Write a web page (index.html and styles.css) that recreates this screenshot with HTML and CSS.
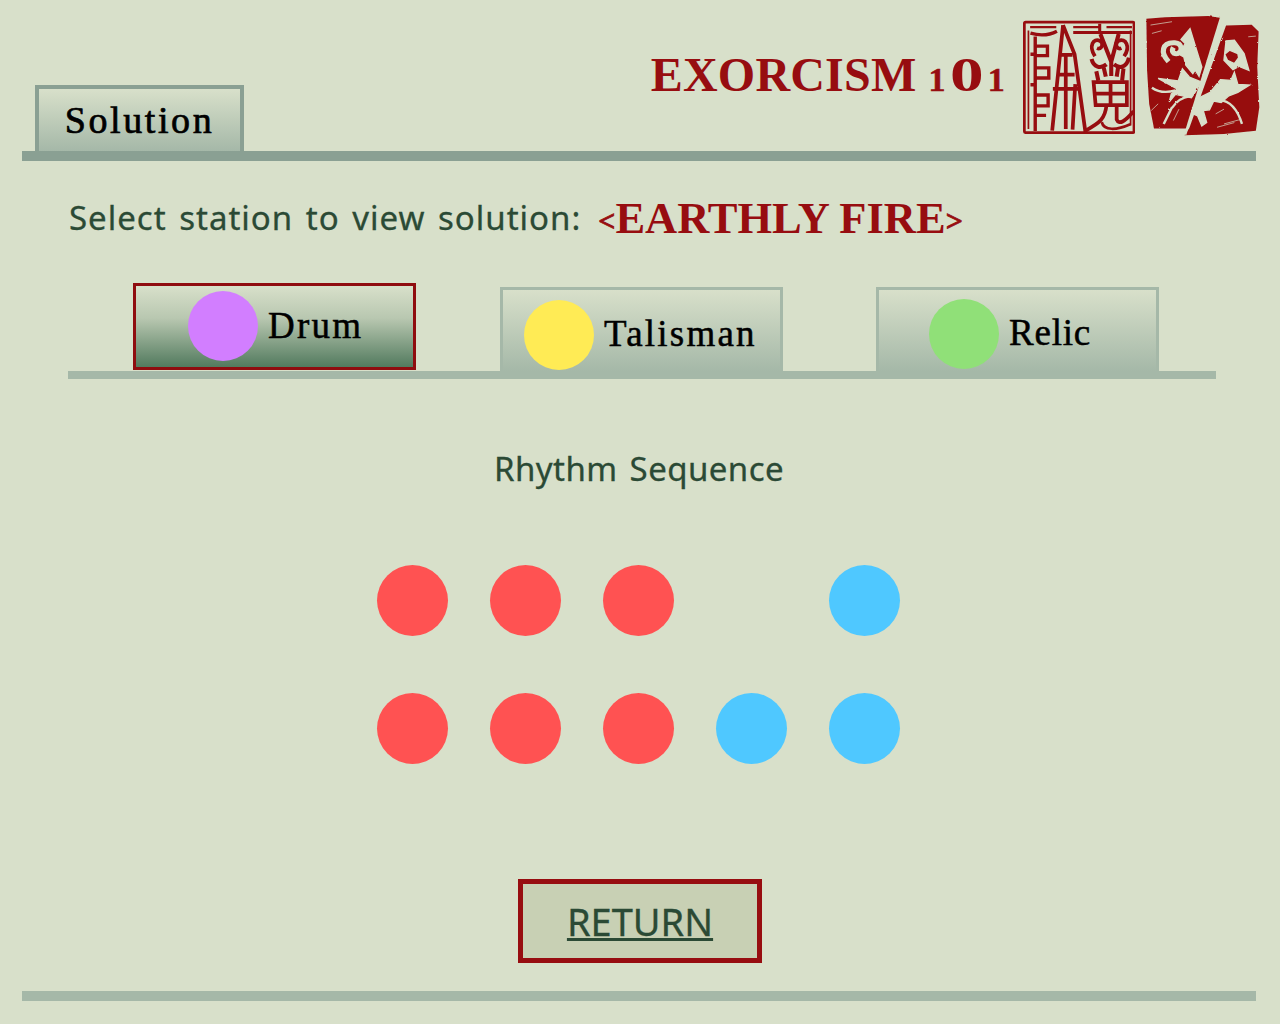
FILE: index.html
```html
<!DOCTYPE html>
<html lang="en">
<head>
<meta charset="utf-8">
<title>Exorcism 101 - Solution</title>
<link rel="stylesheet" href="styles.css">
</head>
<body>
<div class="page">
  <header class="header">
    <div class="main-tab">Solution</div>
    <div class="brand">
      <h1 class="title">EXORCISM <span class="num-one">1</span><span class="num-zero">0</span><span class="num-one">1</span></h1>
      <svg class="seal-a" viewBox="24 30 330 334" aria-hidden="true">
        <g fill="none" stroke="#970d10" stroke-width="8">
          <rect x="28" y="35" width="323" height="326" rx="4"/>
          <path stroke-width="5" d="M40 60V350M341 60V340"/>
          <path stroke-width="7" d="M45 50H122M172 50H250M270 50H345"/>
          <path stroke-width="10" d="M46 68Q90 80 124 62M60 78V356M60 106H96V134H60M60 170H100V200H60M60 250H98V282H60M60 310H92M46 130H60M46 220H60"/>
          <path stroke-width="11" d="M142 44 110 355M142 44 176 130 208 360M124 190H176M112 232H190M150 132V350M178 218 170 352M134 132H170"/>
          <path stroke-width="9" d="M250 40V62M172 66H345"/>
          <path stroke-width="11" d="M236 136C216 104 232 82 250 90 264 98 256 118 242 112M322 136C342 106 326 82 306 90 292 98 300 118 314 112"/>
          <path stroke-width="12" d="M252 70 284 152 306 70M226 144C232 168 252 174 270 160M336 140C330 168 310 174 292 160M240 180 246 208M320 172 316 208M284 150V194M262 170 268 196M304 170 300 196"/>
          <path stroke-width="11" d="M232 212H330V280H238ZM236 246H328M282 212V280M270 280C266 320 250 332 210 354M300 280V322Q310 346 350 298"/>
          <path stroke-width="8" d="M256 330C262 356 300 354 340 336"/>
        </g>
      </svg>
      <svg class="seal-b" viewBox="392 15 332 364" preserveAspectRatio="none" aria-hidden="true">
        <defs>
          <filter id="rough" x="-5%" y="-5%" width="110%" height="110%">
            <feTurbulence type="fractalNoise" baseFrequency="0.09" numOctaves="2" seed="4"/>
            <feDisplacementMap in="SourceGraphic" scale="6"/>
          </filter>
        </defs>
        <g class="rough">
          <path class="ink" d="M396 26 450 22 575 18 612 24 514 354 418 354 404 280 398 180Z"/>
          <path class="ink" d="M626 46 700 44 720 64 716 170 722 290 712 360 620 370 506 374 520 352Z"/>
          <path class="paper" d="M522 56 556 170 548 198 536 178 544 168 530 190 510 165 504 140 490 132 508 100 496 88Z"/>
          <path class="curl" d="M460 154C436 128 440 96 478 98 500 100 502 124 486 130 472 132 468 122 474 112"/>
          <path class="paper" d="M430 204 488 212 500 176 520 200 552 214 540 240 526 262 480 252 462 274 468 250 486 236Z"/>
          <path class="paper" d="M610 208 640 210 650 186 660 222 694 224 660 246 634 256 612 276 590 272 578 298 560 300 570 336 556 346 544 316 526 308 548 262 580 246Z"/>
          <path class="paper" d="M626 92 650 90 678 130 692 180 668 170 660 130 636 120 622 132 630 150 650 160 664 140 670 165 646 178 620 150Z"/>
          <path class="thin" d="M412 232Q440 252 480 240M470 292Q490 262 520 258M606 268Q652 272 672 340M446 340 470 290"/>
        </g>
        <path class="slit" d="M612 22 508 372"/>
        <path class="hair" d="M408 45 470 35M412 70 440 62M410 300 430 280M620 340 670 326M474 330 490 296M600 350 650 336M690 80 712 78M596 310 620 296"/>
      </svg>
    </div>
  </header>
  <div class="rule rule-dark"></div>

  <section class="prompt">
    <span class="prompt-text">Select station to view solution:</span>
    <span class="station"><span class="bracket">&lt;</span>EARTHLY FIRE<span class="bracket">&gt;</span></span>
  </section>

  <nav class="stations">
    <div class="tab tab-active tab-drum"><span class="swatch swatch-drum"></span><span class="tab-label">Drum</span></div>
    <div class="tab tab-talisman"><span class="swatch swatch-talisman"></span><span class="tab-label">Talisman</span></div>
    <div class="tab tab-relic"><span class="swatch swatch-relic"></span><span class="tab-label">Relic</span></div>
  </nav>
  <div class="rule-thin"></div>

  <h2 class="sequence-title">Rhythm Sequence</h2>

  <div class="dots">
    <span class="dot red"></span><span class="dot red"></span><span class="dot red"></span><span class="dot"></span><span class="dot blue"></span>
    <span class="dot red"></span><span class="dot red"></span><span class="dot red"></span><span class="dot blue"></span><span class="dot blue"></span>
  </div>

  <div class="actions"><a class="return" href="#">RETURN</a></div>
  <div class="rule rule-light"></div>
</div>
</body>
</html>
```

FILE: styles.css
```css
* { box-sizing: border-box; }
html, body { margin: 0; padding: 0; }
body { background: #d8e0ca; font-family: "Noto Sans", sans-serif; color: #2b4a35; overflow: hidden; }
.page { width: 1280px; height: 1024px; padding: 0 24px 0 22px; display: flex; flex-direction: column; }

.header { height: 151px; display: flex; justify-content: space-between; align-items: flex-end; }
.main-tab { margin-left: 13px; width: 209px; height: 66px; border: 4px solid #8aa093; border-bottom: 0; background: linear-gradient(#d8e0ca, #a5b8a8); color: #000; font-family: "Liberation Serif", serif; font-size: 38px; letter-spacing: 2.6px; -webkit-text-stroke: 0.7px #000; text-align: center; line-height: 62px; }
.brand { align-self: stretch; display: flex; align-items: flex-start; margin-right: -4px; }
.title { margin: 47px 18px 0 0; color: #970d10; font-family: "Liberation Serif", serif; font-weight: 700; font-size: 48px; line-height: 56px; letter-spacing: 0.2px; white-space: nowrap; }
.num-one { font-size: 34px; -webkit-text-stroke: 0.5px #970d10; }
.num-zero { display: inline-block; width: 42px; text-align: center; transform: scaleX(1.4); }
.seal-a { width: 112px; height: 114px; margin: 20px 10px 0 0; }
.seal-b { width: 115px; height: 122px; margin-top: 15px; }
.rough { filter: url(#rough); }
.ink { fill: #970d10; }
.paper { fill: #d8e0ca; stroke: #d8e0ca; stroke-width: 4; }
.curl { fill: none; stroke: #d8e0ca; stroke-width: 15; }
.thin { fill: none; stroke: #d8e0ca; stroke-width: 7; }
.slit { fill: none; stroke: #d8e0ca; stroke-width: 7; }
.hair { fill: none; stroke: #d8e0ca; stroke-width: 2; }

.rule { height: 10px; flex: none; }
.rule-dark { background: #8aa093; }
.rule-light { background: #a5b8a8; margin-top: 28px; }

.prompt { margin: 32px 0 0 47px; height: 48px; display: flex; align-items: center; gap: 17px; }
.prompt-text { font-size: 33px; letter-spacing: 1px; word-spacing: 3px; -webkit-text-stroke: 0.3px #2b4a35; }
.station { margin-top: 2px; color: #970d10; font-family: "Liberation Serif", serif; font-weight: 700; font-size: 44.5px; white-space: nowrap; }
.bracket { font-size: 30px; vertical-align: 2px; -webkit-text-stroke: 0.8px #970d10; }

.stations { margin: 42px 0 0 46px; width: 1148px; height: 88px; display: flex; align-items: flex-end; }
.tab { width: 283px; display: flex; align-items: center; color: #000; font-family: "Liberation Serif", serif; font-size: 37px; letter-spacing: 2.2px; gap: 10px; }
.tab-label { -webkit-text-stroke: 0.5px #000; position: relative; bottom: 2px; }
.swatch { width: 70px; height: 70px; border-radius: 50%; flex: none; }
.swatch-drum { background: #d27eff; }
.swatch-talisman { background: #ffeb55; }
.swatch-relic { background: #90e078; }
.tab-drum { margin-left: 65px; height: 87px; margin-bottom: 1px; border: 3px solid #8f0c0f; background: linear-gradient(#d8e0ca, #b8c7b0 40%, #527a5e); padding: 0 0 2px 52px; }
.tab-drum .tab-label { bottom: 0; }
.tab-talisman { margin-left: 84px; height: 84px; border: 3px solid #a5b8a8; border-bottom: 0; background: linear-gradient(#d8e0ca, #a5b8a8); padding-left: 21px; padding-top: 9px; }
.tab-relic { margin-left: 93px; height: 84px; border: 3px solid #a5b8a8; border-bottom: 0; background: linear-gradient(#d8e0ca, #a5b8a8); padding-left: 50px; padding-top: 7px; letter-spacing: 0.8px; }
.rule-thin { margin-left: 46px; width: 1148px; height: 8px; background: #a5b8a8; flex: none; }

.sequence-title { margin: 70px 0 0; text-align: center; font-weight: 400; font-size: 33px; line-height: 40px; letter-spacing: 0.45px; word-spacing: 3px; -webkit-text-stroke: 0.3px #2b4a35; }

.dots { margin: 76px 0 0 355px; display: grid; grid-template-columns: repeat(5, 71px); gap: 57px 42px; }
.dot { width: 71px; height: 71px; border-radius: 50%; }
.red { background: #ff5252; }
.blue { background: #4fc8ff; }

.actions { margin-top: 115px; display: flex; justify-content: center; }
.return { width: 244px; height: 84px; margin-left: 2px; border: 5px solid #970d10; background: #c8d0b4; color: #2b4a35; font-size: 38px; line-height: 74px; text-align: center; -webkit-text-stroke: 0.3px #2b4a35; }
```
